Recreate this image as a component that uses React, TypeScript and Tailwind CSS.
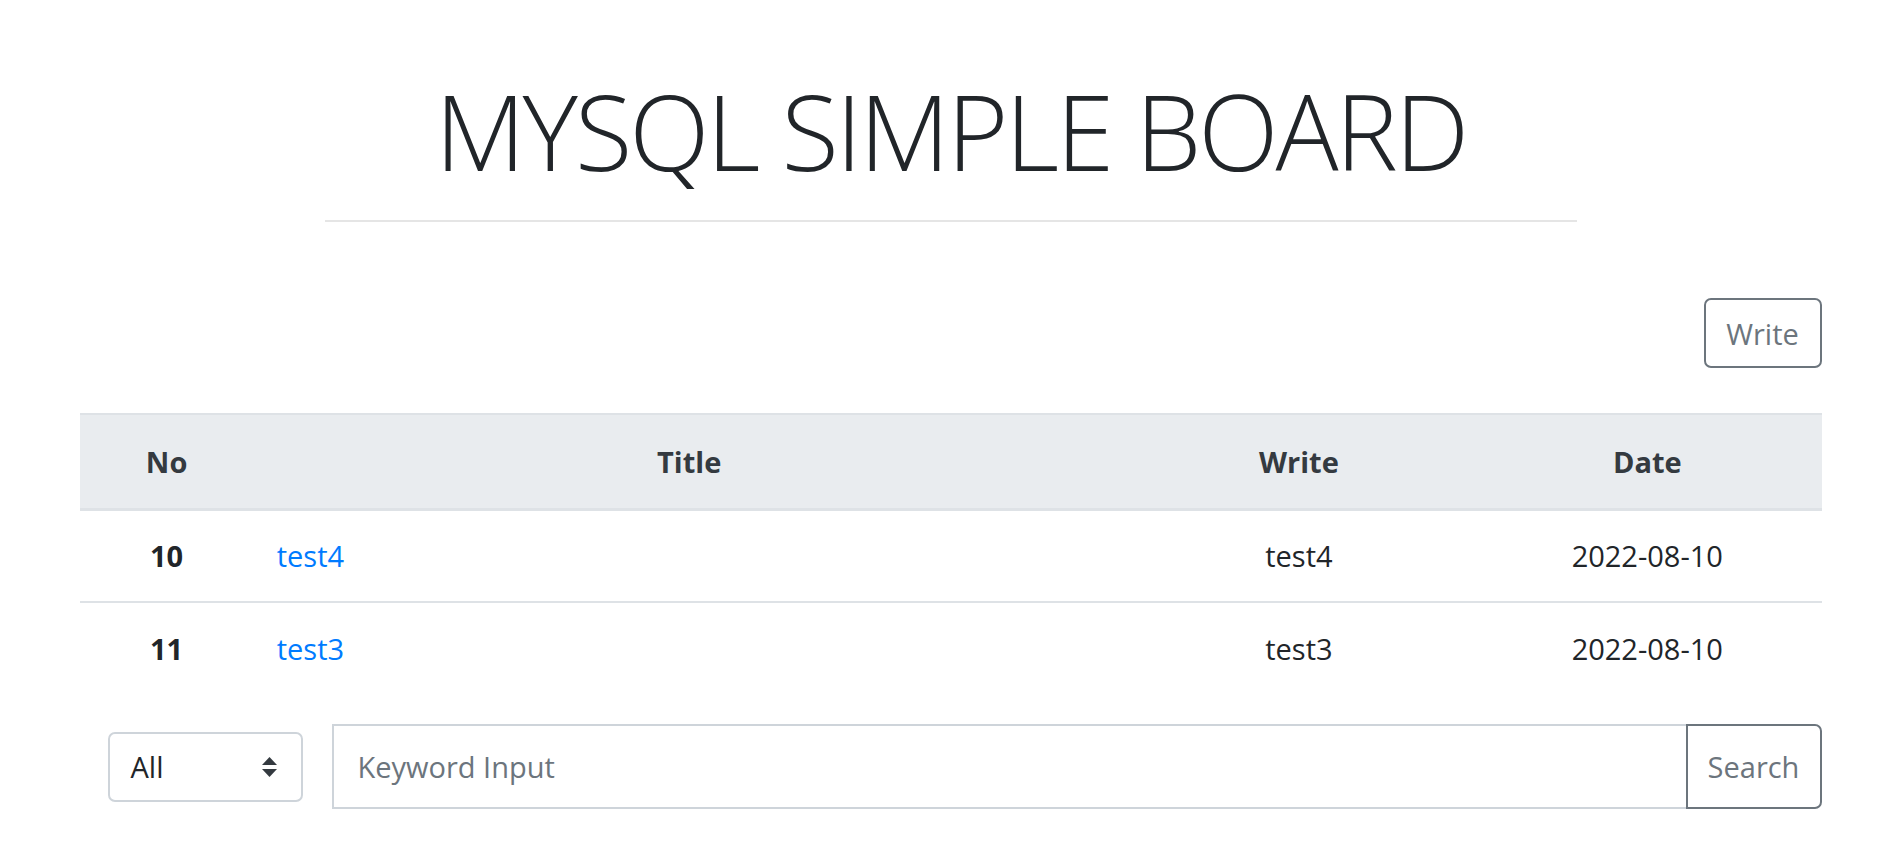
const rows = [
  { no: 10, title: "test4", writer: "test4", date: "2022-08-10" },
  { no: 11, title: "test3", writer: "test3", date: "2022-08-10" },
];

function SortArrows() {
  return (
    <svg width="15" height="20" viewBox="0 0 15 20" className="absolute right-[24px] top-1/2 -translate-y-1/2">
      <path d="M7.5 0 L15 8 L0 8 Z" fill="#343a40" />
      <path d="M0 12 L15 12 L7.5 20 Z" fill="#343a40" />
    </svg>
  );
}

export default function App() {
  return (
    <div className="min-h-screen bg-white text-[#212529] font-['Open_Sans','Noto_Sans',sans-serif] text-[29px]">
      <div className="pt-[68px] text-center">
        <h1 className="text-[105px] font-light leading-[1.2] tracking-[-3px]">MYSQL SIMPLE BOARD</h1>
      </div>
      <div className="w-[1252px] mx-auto mt-[26px] h-[2px] bg-[#e5e5e5]" />

      <div className="w-[1742px] mx-auto">
        <div className="flex justify-end mt-[76px]">
          <button className="w-[118px] h-[70px] border-2 border-[#6c757d] rounded-[7px] text-[#6c757d] leading-none">
            Write
          </button>
        </div>

        <table className="w-full table-fixed mt-[45px] border-collapse">
          <colgroup>
            <col className="w-[10%]" />
            <col className="w-[50%]" />
            <col className="w-[20%]" />
            <col className="w-[20%]" />
          </colgroup>
          <thead>
            <tr className="bg-[#e9ecef] text-[#343a40] border-t-2 border-t-[#dee2e6] border-b-[3px] border-b-[#dee2e6]">
              <th className="h-[95px] font-bold text-center">No</th>
              <th className="font-bold text-center">Title</th>
              <th className="font-bold text-center">Write</th>
              <th className="font-bold text-center">Date</th>
            </tr>
          </thead>
          <tbody>
            {rows.map((r, i) => (
              <tr key={r.no} className={i > 0 ? "border-t-2 border-t-[#dee2e6]" : ""}>
                <td className="h-[93px] text-center font-bold">{r.no}</td>
                <td className="px-[23px]">
                  <a href="#" className="text-[#007bff]">{r.title}</a>
                </td>
                <td className="text-center">{r.writer}</td>
                <td className="text-center">{r.date}</td>
              </tr>
            ))}
          </tbody>
        </table>

        <div className="flex items-center mt-[29px] pl-[28px]">
          <div className="relative w-[195px] h-[70px] border-2 border-[#ced4da] rounded-[7px] flex items-center pl-[21px]">
            <span>All</span>
            <SortArrows />
          </div>
          <div className="flex flex-1 ml-[29px] h-[85px]">
            <div className="flex-1 border-2 border-[#ced4da] border-r-0 flex items-center pl-[24px] text-[#6c757d]">
              Keyword Input
            </div>
            <button className="w-[136px] border-2 border-[#6c757d] rounded-r-[7px] text-[#6c757d]">Search</button>
          </div>
        </div>
      </div>
    </div>
  );
}
